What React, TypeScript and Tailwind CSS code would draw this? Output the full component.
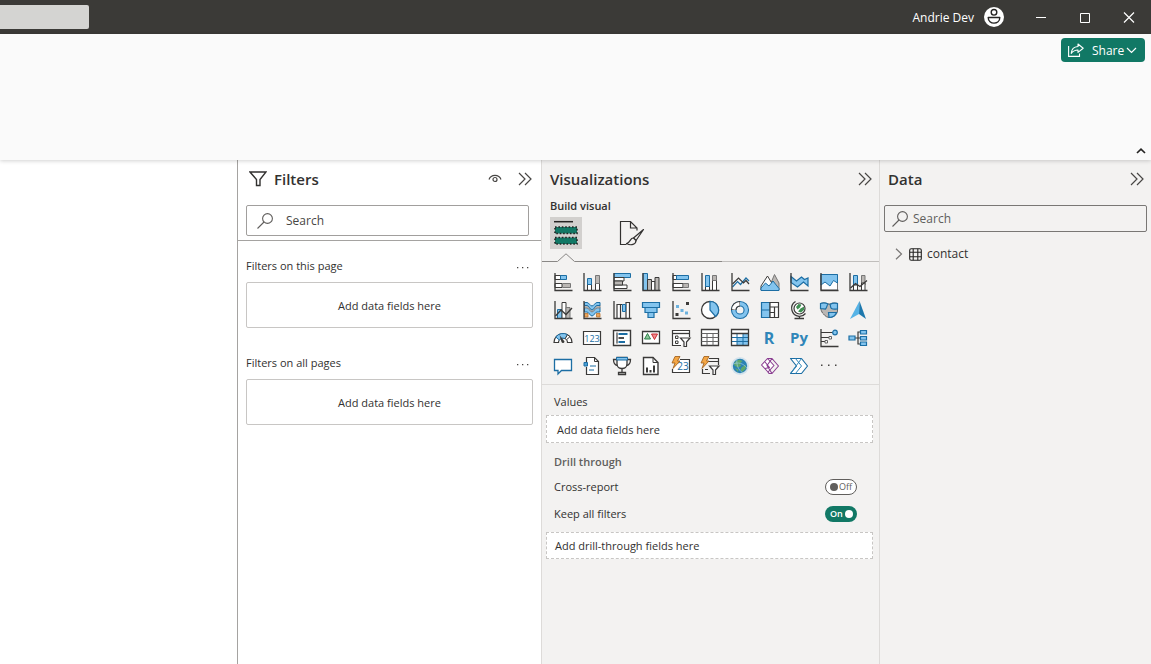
import { useState } from 'react'
import type { ReactNode } from 'react'

const INK = '#3b3a39'
const BLUE = '#83c4ee'
const EDGE = '#1c6ea4'
const GRAY = '#bab7b4'

interface Visual {
  name: string
  art: ReactNode
}

const axis = <path d="M2 1V18.5H19.5" stroke={INK} strokeWidth="1.3" />
const bolt = <path d="M4 0.5H9L6.5 5H9L2 12.5L4 7H1Z" fill="#f3a645" stroke="#9c5a16" strokeWidth="0.8" />
const smallFunnel = <path d="M9.5 10H19L15.5 14V18.5H13V14Z" fill="#fff" stroke={INK} strokeWidth="1.2" />

const visuals: Visual[] = [
  {
    name: 'Stacked bar chart',
    art: <>
      <path d="M2 3.5H8V7.5H2ZM2 11.5H9V15.5H2Z" fill="#fff" stroke={INK} />
      <path d="M7.5 3.5H13.5V7.5H7.5Z" fill={BLUE} stroke={EDGE} />
      <path d="M9.5 11.5H17.5V15.5H9.5Z" fill={GRAY} stroke="#777" />
      {axis}
    </>,
  },
  {
    name: 'Stacked column chart',
    art: <>
      <path d="M5.5 12V18.5H9.5V12ZM13.5 10V18.5H17.5V10Z" fill="#fff" stroke={INK} />
      <path d="M5.5 6.5H9.5V12.5H5.5Z" fill={BLUE} stroke={EDGE} />
      <path d="M13.5 3.5H17.5V11.5H13.5Z" fill={GRAY} stroke="#777" />
      {axis}
    </>,
  },
  {
    name: 'Clustered bar chart',
    art: <>
      <path d="M2 1.5H18.5V5.5H2Z" fill={BLUE} stroke={EDGE} />
      <path d="M2 5.5H12V9H2ZM2 13H15V16.5H2Z" fill="#fff" stroke={INK} />
      <path d="M2 9H10.5V13H2Z" fill={GRAY} stroke={INK} />
      {axis}
    </>,
  },
  {
    name: 'Clustered column chart',
    art: <>
      <path d="M2 1.5H6.5V18.5H2Z" fill={BLUE} stroke={EDGE} />
      <path d="M6.5 7.5H10.5V18.5H6.5Z" fill={GRAY} stroke={INK} />
      <path d="M10.5 9.5H14V18.5H10.5Z" fill="#fff" stroke={INK} />
      <path d="M14 5.5H18V18.5H14Z" fill={GRAY} stroke={INK} />
      {axis}
    </>,
  },
  {
    name: '100% stacked bar chart',
    art: <>
      <path d="M2 3.5H6V7.5H2ZM2 11.5H12V15.5H2Z" fill="#fff" stroke={INK} />
      <path d="M5.5 3.5H17.5V7.5H5.5Z" fill={BLUE} stroke={EDGE} />
      <path d="M12 11.5H17.5V15.5H12Z" fill={GRAY} stroke="#777" />
      {axis}
    </>,
  },
  {
    name: '100% stacked column chart',
    art: <>
      <path d="M5.5 14V18.5H9.5V14ZM12.5 8V18.5H16.5V8Z" fill="#fff" stroke={INK} />
      <path d="M5.5 3.5H9.5V14.5H5.5Z" fill={BLUE} stroke={EDGE} />
      <path d="M12.5 3.5H16.5V8.5H12.5Z" fill={GRAY} stroke="#777" />
      {axis}
    </>,
  },
  {
    name: 'Line chart',
    art: <>
      <path d="M2.5 15L7.5 9.5L10.5 12.5L16 6L19 9" stroke={EDGE} strokeWidth="1.2" />
      <path d="M2.5 12L8.5 6L13.5 11L16 8.5L19 12" stroke={INK} strokeWidth="1.2" />
      {axis}
    </>,
  },
  {
    name: 'Area chart',
    art: <>
      <path d="M8 18L14.5 2.5L19 11V18Z" fill={GRAY} stroke="#777" />
      <path d="M1 18V14L7.5 4L16 18Z" fill="#fff" stroke={INK} />
      <path d="M1 18.5V16L5.5 11L9 14L13 9L19 16.5V18.5Z" fill={BLUE} stroke={EDGE} />
    </>,
  },
  {
    name: 'Stacked area chart',
    art: <>
      <path d="M2 4.5L7.5 9L12.5 5L15.5 7.5L19 6V14L14.5 10L8.5 15L2 10.5Z" fill={BLUE} stroke={EDGE} strokeWidth="1.2" />
      {axis}
    </>,
  },
  {
    name: '100% stacked area chart',
    art: <>
      <path d="M2 2.5H18.5V18H2Z" fill="#fff" stroke="#777" />
      <path d="M2 2.5H18.5V11L14.5 8.5L11 14L6 10L2 13Z" fill={BLUE} stroke={EDGE} />
      {axis}
    </>,
  },
  {
    name: 'Line and stacked column chart',
    art: <>
      <path d="M5.5 3.5H9.5V13H5.5Z" fill={BLUE} stroke={EDGE} />
      <path d="M13.5 3.5H17V13H13.5Z" fill={GRAY} stroke="#777" />
      <path d="M5.5 13H9.5V18.5H5.5ZM13.5 11H17V18.5H13.5Z" fill="#fff" stroke={INK} />
      <path d="M2.5 16L7.5 11.5L12 14.5L19 8.5" stroke={INK} strokeWidth="1.3" />
      {axis}
    </>,
  },
  {
    name: 'Line and clustered column chart',
    art: <>
      <path d="M4.5 9.5H9V18.5H4.5Z" fill={BLUE} stroke={EDGE} />
      <path d="M9 2.5H13V18.5H9Z" fill="#fff" stroke={INK} />
      <path d="M13 7.5H17V18.5H13Z" fill={GRAY} stroke="#777" />
      <path d="M2.5 16L8 10L13 14.5L19 8" stroke={INK} strokeWidth="1.3" />
      {axis}
    </>,
  },
  {
    name: 'Ribbon chart',
    art: <>
      <path d="M2.5 13.5H6V17H2.5ZM14.5 13.5H18V17H14.5Z" fill="#eaa55c" stroke="#b8722d" strokeWidth="0.8" />
      <path d="M2.5 7.5H5C7 7.5 8 11.5 10 11.5S13 7.5 15 7.5H18V12H15C13 12 12 16 10 16S7 12 5 12H2.5Z" fill={BLUE} stroke={EDGE} />
      <path d="M2.5 5H5C7 5 8 9.5 10 9.5S13 5 15 5H18V8H15C13 8 12 12 10 12S7 8 5 8H2.5Z" fill={GRAY} stroke="#777" strokeWidth="0.8" />
      <path d="M2.5 2.5H5C7 2.5 8 6 10 6S13 2.5 15 2.5H18V5.5H15C13 5.5 12 10 10 10S7 5.5 5 5.5H2.5Z" fill={BLUE} stroke={EDGE} />
      {axis}
    </>,
  },
  {
    name: 'Waterfall chart',
    art: <>
      <path d="M5 4.5H8.5V18.5H5ZM14 2.5H17.5V18.5H14Z" fill="#fff" stroke={INK} strokeWidth="1.2" />
      <path d="M8.5 4.5H10.5" stroke={INK} />
      <path d="M10.5 4.5H13.5V11.5H10.5Z" fill={BLUE} stroke={EDGE} />
      {axis}
    </>,
  },
  {
    name: 'Funnel',
    art: <path d="M1.5 2.5H18.5V7.5H1.5ZM4 7.5H16V12.5H4ZM7 12.5H13V17.5H7Z" fill={BLUE} stroke={EDGE} strokeWidth="1.2" />,
  },
  {
    name: 'Scatter chart',
    art: <>
      <path d="M5 5H8V8H5ZM9.5 9H12.5V12H9.5ZM14 11.5H17V14.5H14Z" fill="#6db2de" />
      <path d="M15 2H18V5H15ZM4.5 13H7.5V16H4.5Z" fill={INK} />
      {axis}
    </>,
  },
  {
    name: 'Pie chart',
    art: <>
      <circle cx="10" cy="10" r="8.5" fill="#fff" stroke={INK} strokeWidth="1.3" />
      <path d="M10 1.5A8.5 8.5 0 0 1 15.5 16.5L10 10Z" fill={BLUE} stroke={EDGE} strokeWidth="1.2" />
    </>,
  },
  {
    name: 'Donut chart',
    art: <>
      <circle cx="10" cy="10" r="6.3" stroke={EDGE} strokeWidth="5.6" />
      <circle cx="10" cy="10" r="6.3" stroke={BLUE} strokeWidth="3.4" />
      <path d="M10 3.7A6.3 6.3 0 0 0 3.7 10" stroke={INK} strokeWidth="5.6" />
      <path d="M9.5 3.7A6.3 6.3 0 0 0 3.7 9.5" stroke="#fff" strokeWidth="3.4" />
    </>,
  },
  {
    name: 'Treemap',
    art: <>
      <path d="M1.5 2.5H10V10H1.5ZM1.5 10H10V17.5H1.5Z" fill={BLUE} stroke={EDGE} strokeWidth="1.2" />
      <path d="M10 2.5H18.5V7H10ZM10 7H14.5V12.5H10ZM14.5 7H18.5V17.5H14.5ZM10 12.5H14.5V17.5H10Z" fill="#fff" stroke={INK} strokeWidth="1.2" />
    </>,
  },
  {
    name: 'Map',
    art: <>
      <circle cx="10.5" cy="8.5" r="5.5" fill="#fff" stroke={INK} strokeWidth="1.2" />
      <path d="M7 7L9.5 4L12.5 4.5L11 7.5L8.5 9.5ZM11.5 8.5L15 6.5V10L12 12.5L9 11.5Z" fill="#3f8f52" />
      <path d="M6.5 1.5A8 8 0 0 0 10 16.3A8 8 0 0 0 16.5 13.5M10.5 16V18.5M5.5 18.5H15" stroke={INK} strokeWidth="1.3" />
    </>,
  },
  {
    name: 'Filled map',
    art: <>
      <path d="M1.5 3.5C7 2 8 4.5 11 4C14 2.5 16 3 18.5 3.5V11C18 15 14 17.5 10 17.5C6 17 5 14 3.5 13C1.5 10 1.5 7 1.5 3.5Z" fill={GRAY} stroke="#666" />
      <path d="M1.5 3.5C4 2.5 7 2.8 9 4C7.5 6 8 7.5 6.5 9L1.5 8.5Z" fill={BLUE} stroke={EDGE} strokeWidth="1.2" />
      <path d="M11 4.5C14 2.5 16 3 18.5 3.5V9C16 9 14 9.5 12.5 8.5C11 7.5 12 6 11 4.5Z" fill={BLUE} stroke={EDGE} strokeWidth="1.2" />
      <path d="M9.5 12.5H17.5C16.5 15.5 13.5 17.5 10 17.5Z" fill={BLUE} stroke={EDGE} strokeWidth="1.2" />
    </>,
  },
  {
    name: 'Azure map',
    art: <>
      <path d="M11.5 1L2 19L11 14Z" fill="#56b3e6" />
      <path d="M11.5 1L18 19L11 14Z" fill="#1d78ad" />
    </>,
  },
  {
    name: 'Gauge',
    art: <>
      <path d="M1 14.5A9 9 0 0 1 19 14.5H14.5A4.5 4.5 0 0 0 5.5 14.5Z" fill="#fff" stroke={INK} strokeWidth="1.2" />
      <path d="M2.8 9A9 9 0 0 1 14.5 6.7L12.2 10.6A4.5 4.5 0 0 0 6.3 12Z" fill={BLUE} stroke={EDGE} />
      <path d="M12.2 10.6L14.5 6.7L16.9 8.7L13.6 11.7Z" fill="#fff" stroke={INK} />
      <path d="M6.5 7L11.5 13.5C11 15.5 9 15.5 8.5 14Z" fill={INK} />
    </>,
  },
  {
    name: 'Card',
    art: <>
      <path d="M1.5 3.5H18.5V16.5H1.5Z" fill="#fff" stroke={INK} strokeWidth="1.2" />
      <text x="10" y="13.5" textAnchor="middle" fontSize="9" fill={EDGE}>123</text>
    </>,
  },
  {
    name: 'Multi-row card',
    art: <>
      <path d="M1.5 2.5H18.5V17.5H1.5Z" fill="#fff" stroke={INK} strokeWidth="1.4" />
      <path d="M5 4.5V15.5" stroke={INK} strokeWidth="1.2" />
      <path d="M6.5 6H15.5M6.5 14H13" stroke={EDGE} strokeWidth="1.8" />
      <path d="M6.5 10H12" stroke={INK} strokeWidth="1.8" />
    </>,
  },
  {
    name: 'KPI',
    art: <>
      <path d="M1.5 3.5H18.5V15.5H1.5Z" fill="#fff" stroke={INK} strokeWidth="1.3" />
      <path d="M3.5 11L6.5 5.5L9.5 11Z" fill="#8cc79b" stroke="#2d8148" />
      <path d="M10.5 6H16.5L13.5 11.5Z" fill="#ef8b8b" stroke="#ca2d36" />
    </>,
  },
  {
    name: 'Slicer',
    art: <>
      <path d="M10 17.5H1.5V2.5H18.5V9" fill="#fff" stroke={INK} strokeWidth="1.2" />
      <path d="M1.5 5.5H18.5" stroke={INK} strokeWidth="1.3" />
      <path d="M4.5 8H7V10.5H4.5ZM4.5 13H7V15.5H4.5Z" stroke={INK} />
      {smallFunnel}
    </>,
  },
  {
    name: 'Table',
    art: <>
      <path d="M1.5 1.5H18.5V17.5H1.5Z" fill="#fff" stroke={INK} strokeWidth="1.3" />
      <path d="M1.5 5.5H18.5M1.5 9.5H18.5M1.5 13.5H18.5M7 5.5V17.5M13 5.5V17.5" stroke="#666" />
    </>,
  },
  {
    name: 'Matrix',
    art: <>
      <path d="M1.5 1.5H18.5V17.5H1.5Z" fill="#fff" />
      <path d="M13 5.5H18.5V17.5H7V9.5H13Z" fill={BLUE} />
      <path d="M1.5 9.5H18.5M1.5 13.5H18.5M7 5.5V17.5M13 5.5V17.5" stroke={EDGE} />
      <path d="M1.5 1.5H18.5V17.5H1.5ZM1.5 5.5H18.5" stroke={INK} strokeWidth="1.3" />
    </>,
  },
  { name: 'R script visual', art: <text x="9" y="15.5" textAnchor="middle" fontSize="16" fontWeight="700" fill="#2f86b9">R</text> },
  { name: 'Python visual', art: <text x="10" y="14.5" textAnchor="middle" fontSize="15" fontWeight="700" fill="#2f86b9">Py</text> },
  {
    name: 'Key influencers',
    art: <>
      <path d="M2 4.5H14M2 9.5H10M2 13.5H6" stroke={INK} />
      <circle cx="16" cy="4.5" r="2.3" fill={BLUE} stroke={EDGE} strokeWidth="1.2" />
      <path d="M10 8.5H12.5V11H10ZM6 12.5H8.5V15H6Z" fill="#fff" stroke="#666" />
      {axis}
    </>,
  },
  {
    name: 'Decomposition tree',
    art: <>
      <path d="M7 10H12M12 4H10V16H12" stroke={INK} strokeWidth="1.2" />
      <path d="M1 8H7V12H1ZM12.5 2.5H18.5V6H12.5ZM12.5 8.5H18.5V12H12.5ZM12.5 14H18.5V17.5H12.5Z" fill={BLUE} stroke={EDGE} strokeWidth="1.2" />
    </>,
  },
  {
    name: 'Q&A',
    art: <path d="M1.5 3.5H18.5V14.5H8.5L5 18V14.5H1.5Z" fill="#fff" stroke={EDGE} strokeWidth="1.3" />,
  },
  {
    name: 'Narrative',
    art: <>
      <path d="M4.5 6V1.5H12.5L16.5 5.5V18.5H4.5V11" fill="#fff" stroke={INK} strokeWidth="1.2" />
      <path d="M12.5 1.5V5.5H16.5" stroke={INK} />
      <path d="M2 6.5H5.5V10H2Z" fill="#4b9fd4" stroke={EDGE} />
      <path d="M8 10H14M7 14H12" stroke={EDGE} strokeWidth="1.2" />
    </>,
  },
  {
    name: 'Metrics',
    art: <>
      <path d="M5 1.5H15V8C15 14 5 14 5 8Z" fill="#fff" stroke={INK} strokeWidth="1.3" />
      <path d="M5 3.5H1.5C1.5 7 2.5 9 5.5 9.5M15 3.5H18.5C18.5 7 17.5 9 14.5 9.5" stroke={INK} strokeWidth="1.3" />
      <path d="M4.5 1.5H15.5V4H4.5Z" fill={BLUE} stroke={EDGE} />
      <path d="M10 12.5V16M6.5 18.5V16.5H13.5V18.5Z" stroke={INK} strokeWidth="1.3" />
    </>,
  },
  {
    name: 'Paginated report',
    art: <>
      <path d="M2.5 1.5H12L17 6.5V18.5H2.5Z" fill="#fff" stroke={INK} strokeWidth="1.4" />
      <path d="M12 1.5V6.5H17" stroke={INK} />
      <path d="M6 16.5V11.5M9.5 16.5V14M13 16.5V9.5" stroke={INK} strokeWidth="2" />
    </>,
  },
  {
    name: 'Card (new)',
    art: <>
      <path d="M9 3.5H18.5V16.5H1.5V13" fill="#fff" stroke={INK} strokeWidth="1.2" />
      <text x="12" y="14" textAnchor="middle" fontSize="10" fill={EDGE}>23</text>
      {bolt}
    </>,
  },
  {
    name: 'Slicer (new)',
    art: <>
      <path d="M9 2.5H18.5V9M10 17.5H2.5V13" stroke={INK} strokeWidth="1.2" />
      <path d="M8 5.5H18.5M5 13.5H8" stroke={INK} strokeWidth="1.2" />
      {smallFunnel}
      {bolt}
    </>,
  },
  {
    name: 'ArcGIS Maps',
    art: <>
      <circle cx="10" cy="10" r="9" fill="#d3e2ec" />
      <circle cx="10" cy="10" r="7.2" fill="#2a82b4" />
      <path d="M5 6L9 3.5L12.5 5L10 7.5L11 10L7.5 11.5L4 9ZM12 11L16 9L15.5 13L12 16L10.5 13.5ZM5 12L8.5 13.5L8 16Z" fill="#5fa96c" />
      <path d="M3 8C8 6 13 7 17 12M7 3C6 8 8 14 13 17" stroke="#9bc9e0" strokeWidth="0.7" />
    </>,
  },
  {
    name: 'Power Apps',
    art: <>
      <path d="M7.5 2.5L1.5 9L8 16L14 9.5Z" fill="#fff" stroke="#8a3d91" strokeWidth="1.1" strokeLinejoin="round" />
      <path d="M7.5 2.5H12L18.5 10L12 17.5H9L8 16M12 2.5L7 9.5L12 17.5M5 6L9.5 11.5L5 12.5" stroke="#8a3d91" strokeWidth="1.1" strokeLinejoin="round" />
    </>,
  },
  {
    name: 'Power Automate',
    art: <>
      <path d="M1.5 2.5H12.5L18.5 10L12.5 17.5H1.5L7.5 10Z" fill="#fff" stroke={EDGE} strokeWidth="1.2" strokeLinejoin="round" />
      <path d="M6.5 2.5L12.5 10L6.5 17.5M12.5 2.5L1.5 17.5" stroke="#2f86b9" />
    </>,
  },
  {
    name: 'Get more visuals',
    art: <path d="M2 8.5H3.5V10H2ZM9 8.5H10.5V10H9ZM16 8.5H17.5V10H16Z" fill="#484644" />,
  },
]

function CollapseButton({ label }: { label: string }) {
  return (
    <button type="button" aria-label={label} className="flex h-6 w-6 items-center justify-center">
      <svg width="14" height="14" viewBox="0 0 14 14" fill="none" stroke="#484644" strokeWidth="1.2">
        <path d="M1 1L7 7L1 13M7 1L13 7L7 13" />
      </svg>
    </button>
  )
}

function SearchGlyph() {
  return (
    <svg className="shrink-0" width="16" height="16" viewBox="0 0 16 16" fill="none" stroke="#605e5c" strokeWidth="1.1">
      <circle cx="10.5" cy="5.5" r="4.9" />
      <path d="M7 9L0.5 15.5" />
    </svg>
  )
}

function FilterSection({ title }: { title: string }) {
  return (
    <section>
      <div className="flex h-8 items-center justify-between">
        <h3>{title}</h3>
        <button type="button" aria-label={`More options for ${title}`} className="flex h-4 w-5 items-center justify-center pt-1">
          <svg width="14" height="4" viewBox="0 0 14 4" fill="#484644">
            <path d="M1 1H2.3V2.3H1ZM6 1H7.3V2.3H6ZM11 1H12.3V2.3H11Z" />
          </svg>
        </button>
      </div>
      <div className="flex h-[46px] items-center justify-center rounded-xs border border-[#c8c6c4] pt-0.5">Add data fields here</div>
    </section>
  )
}

function Toggle({ label, initial }: { label: string; initial: boolean }) {
  const [on, setOn] = useState(initial)
  return (
    <label className="flex h-[27px] items-center justify-between pr-4 pb-px pl-2">
      {label}
      <input type="checkbox" role="switch" className="sr-only" checked={on} onChange={() => setOn(!on)} />
      <span
        aria-hidden="true"
        className={
          on
            ? 'flex h-4 w-8 items-center justify-between rounded-full bg-[#117865] pr-1 pl-[5px] text-[9px] font-semibold text-white'
            : 'flex h-4 w-8 flex-row-reverse items-center justify-between rounded-full border border-[#605e5c] bg-white px-1 text-[9px] text-[#605e5c]'
        }
      >
        {on ? 'On' : 'Off'}
        <span className={on ? 'h-2 w-2 rounded-full bg-white' : 'h-2 w-2 rounded-full bg-[#605e5c]'} />
      </span>
    </label>
  )
}

function TitleBar() {
  return (
    <header className="flex h-[34px] items-center bg-[#3b3a37] text-white">
      <div className="h-6 w-[89px] rounded-r-xs bg-[#d4d4d2]" />
      <span className="ml-auto pt-0.5 text-xs">Andrie Dev</span>
      <button type="button" aria-label="Account" className="mr-[15px] ml-2.5">
        <svg width="20" height="20" viewBox="0 0 20 20" fill="none" stroke="#252423" strokeWidth="1.4">
          <circle cx="10" cy="10" r="10" fill="#fff" stroke="none" />
          <circle cx="10" cy="5.3" r="2.8" />
          <path d="M4.2 10.5H15.8C15.8 18 4.2 18 4.2 10.5Z" strokeLinejoin="round" />
        </svg>
      </button>
      <button type="button" aria-label="Minimize" className="flex h-full w-11 items-center justify-center">
        <svg width="12" height="12" viewBox="0 0 12 12" stroke="#fff"><path d="M1 6.5H11" /></svg>
      </button>
      <button type="button" aria-label="Maximize" className="flex h-full w-11 items-center justify-center">
        <svg width="12" height="12" viewBox="0 0 12 12" fill="none" stroke="#fff"><path d="M1.5 2.5H10.5V11.5H1.5Z" /></svg>
      </button>
      <button type="button" aria-label="Close" className="flex h-full w-11 items-center justify-center">
        <svg width="12" height="12" viewBox="0 0 12 12" stroke="#fff" strokeWidth="1.2"><path d="M1 1.5L11 11.5M11 1.5L1 11.5" /></svg>
      </button>
    </header>
  )
}

function Ribbon() {
  return (
    <div className="relative flex h-[126px] flex-col items-end justify-between bg-[#fafafa] pt-1 shadow-[0_1px_4px_rgba(0,0,0,0.18)]">
      <button type="button" className="mr-1.5 flex h-6 w-[84px] items-center rounded bg-[#117865] pl-[7px] text-xs text-white">
        <svg width="16" height="14" viewBox="0 0 16 14" fill="none" stroke="#fff" strokeWidth="1.1">
          <path d="M0.6 3V13.4H11.5V10.5" />
          <path d="M10 1L15.2 5.2L10 9.4V7C7 7 5 8 3.2 10.3C3.5 6.5 6 3.8 10 3.5Z" strokeLinejoin="round" />
        </svg>
        <span className="ml-2 pt-px">Share</span>
        <svg className="ml-0.5" width="11" height="7" viewBox="0 0 11 7" fill="none" stroke="#fff" strokeWidth="1.2"><path d="M1 1L5.5 5.5L10 1" /></svg>
      </button>
      <button type="button" aria-label="Collapse the ribbon" className="mr-1 flex h-[18px] w-3 items-center justify-center">
        <svg width="10" height="6" viewBox="0 0 10 6" fill="none" stroke="#252423" strokeWidth="1.7"><path d="M1 5L5 1.2L9 5" /></svg>
      </button>
    </div>
  )
}

function FiltersPane() {
  return (
    <aside className="w-[304px] border-l border-[#a5a3a1] bg-white">
      <div className="border-b border-[#a5a3a1] pb-1">
        <div className="flex h-[45px] items-center pr-1 pb-[7px] pl-[11px]">
          <svg width="18" height="16" viewBox="0 0 18 16" fill="none" stroke="#323130" strokeWidth="1.4">
            <path d="M1 1H17L11 8.5V14.5H7.5V8.5Z" />
          </svg>
          <h2 className="ml-[7px] flex-1 text-[15px] font-semibold">Filters</h2>
          <button type="button" aria-label="Show filters" className="mr-1.5 flex h-6 w-6 items-center justify-center">
            <svg width="14" height="10" viewBox="0 0 14 10" fill="none" stroke="#484644" strokeWidth="1.2">
              <path d="M1 5.5C3 0 11 0 13 5.5" />
              <circle cx="7" cy="5.5" r="2" />
            </svg>
          </button>
          <CollapseButton label="Collapse filters" />
        </div>
        <label className="mr-3 ml-2 flex h-[31px] items-center rounded-xs border border-[#a19f9d] pl-2.5">
          <SearchGlyph />
          <input type="search" aria-label="Search filters" placeholder="Search" className="ml-[13px] w-full min-w-0 text-xs outline-none placeholder:text-[#484644]" />
        </label>
      </div>
      <div className="flex flex-col gap-[19px] px-2 pt-[9px]">
        <FilterSection title="Filters on this page" />
        <FilterSection title="Filters on all pages" />
      </div>
    </aside>
  )
}

function VisualizationsPane() {
  return (
    <aside className="w-[338px] border-l border-[#dddbd9] bg-[#f3f2f1]">
      <div className="flex h-[38px] items-center justify-between pr-0.5 pl-2">
        <h2 className="text-[15px] font-semibold">Visualizations</h2>
        <CollapseButton label="Collapse visualizations" />
      </div>
      <h3 className="h-[19px] pl-2 leading-4 font-semibold">Build visual</h3>
      <div className="flex gap-[34px] pl-2">
        <button type="button" aria-label="Build visual" className="flex h-8 w-8 items-center justify-center bg-[#d2d0ce]">
          <svg width="26" height="26" viewBox="0 0 26 26" fill="none">
            <path d="M1 1.7H20" stroke="#252423" strokeWidth="1.5" />
            <path d="M2 7H24V13.5H2ZM2 17.5H24V24H2Z" fill="#117865" stroke="#252423" strokeWidth="1.6" strokeDasharray="1.6 1.8" />
          </svg>
        </button>
        <button type="button" aria-label="Format visual" className="flex h-8 w-8 items-center justify-center">
          <svg width="26" height="26" viewBox="0 0 26 26" fill="none" stroke="#323130" strokeWidth="1.2">
            <path d="M7.5 24.5H1.5V1.5H11.5L18 8V10.5M11.5 1.5V8H18" />
            <path d="M24.5 9.5L14.5 18L17 20.5L24.5 9.5Z" fill="#f3f2f1" strokeLinejoin="round" />
            <path d="M14.5 18C11 17.5 12 22.5 7.5 23.5C12 26 17 24.5 17 20.5Z" fill="#f3f2f1" strokeLinejoin="round" />
          </svg>
        </button>
      </div>
      <div className="flex h-[13px] items-end">
        <svg width="34" height="9" viewBox="0 0 34 9" fill="none" stroke="#8a8886"><path d="M0 8.5H15.5L24 0.8L32.5 8.5H34" /></svg>
        <div className="w-[146px] border-b border-[#8a8886]" />
        <div className="flex-1 border-b border-[#c0bebc]" />
      </div>
      <div className="grid grid-cols-11 border-b border-[#dddbd9] px-1.5 pt-1.5 pb-1">
        {visuals.map((v) => (
          <button key={v.name} type="button" aria-label={v.name} className="flex h-7 items-center justify-center">
            <svg className="overflow-visible" width="20" height="20" viewBox="0 0 20 20" fill="none">{v.art}</svg>
          </button>
        ))}
      </div>
      <div className="pr-1.5 pl-1">
        <h3 className="h-[30px] pt-[9px] pl-2 leading-4">Values</h3>
        <div className="flex h-7 items-center border border-dashed border-[#c8c6c4] bg-white px-2.5 pt-0.5">Add data fields here</div>
        <h3 className="h-[31px] pt-[11px] pl-2 leading-4 font-semibold text-[#605e5c]">Drill through</h3>
        <Toggle label="Cross-report" initial={false} />
        <Toggle label="Keep all filters" initial={true} />
        <div className="mt-1 flex h-[27px] items-center border border-dashed border-[#c8c6c4] bg-white px-2 pt-px">
          Add drill-through fields here
        </div>
      </div>
    </aside>
  )
}

function DataPane() {
  return (
    <aside className="w-[272px] border-l border-[#dddbd9] bg-[#f3f2f1]">
      <div className="flex h-[45px] items-center justify-between pr-0.5 pb-[7px] pl-2">
        <h2 className="text-[15px] font-semibold">Data</h2>
        <CollapseButton label="Collapse data" />
      </div>
      <label className="mx-1 flex h-[27px] items-center rounded-xs border border-[#797775] pl-[7px]">
        <SearchGlyph />
        <input type="search" aria-label="Search data" placeholder="Search" className="ml-[5px] w-full min-w-0 text-xs outline-none placeholder:text-[#605e5c]" />
      </label>
      <ul className="pt-3">
        <li>
          <button type="button" aria-expanded="false" className="flex h-5 w-full items-center pl-[15px]">
            <svg width="8" height="12" viewBox="0 0 8 12" fill="none" stroke="#797775" strokeWidth="1.2"><path d="M1 0.8L6.5 6L1 11.2" /></svg>
            <svg className="ml-1.5" width="13" height="13" viewBox="0 0 13 13" fill="none" stroke="#252423" strokeWidth="1.1">
              <rect x="0.7" y="0.7" width="11.6" height="11.6" rx="1.5" />
              <path d="M4.2 0.7V12.3M8.8 0.7V12.3M0.7 4.2H12.3M0.7 8.8H12.3" />
            </svg>
            <span className="ml-[5px] text-xs">contact</span>
          </button>
        </li>
      </ul>
    </aside>
  )
}

export default function App() {
  return (
    <div className="flex min-h-screen flex-col bg-white font-['Open_Sans',sans-serif] text-[11px] text-[#323130]">
      <TitleBar />
      <Ribbon />
      <div className="flex flex-1">
        <main className="flex-1 bg-white" />
        <FiltersPane />
        <VisualizationsPane />
        <DataPane />
      </div>
    </div>
  )
}
